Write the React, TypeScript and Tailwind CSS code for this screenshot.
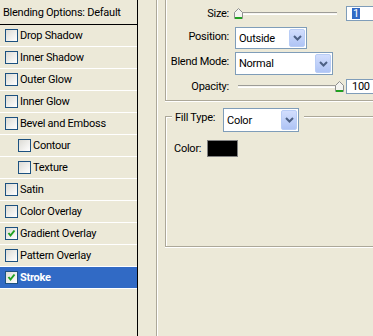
import React from "react";

type Layer = {
  label: string;
  sub?: boolean;
  checked?: boolean;
  active?: boolean;
};

const layers: Layer[] = [
  { label: "Drop Shadow" },
  { label: "Inner Shadow" },
  { label: "Outer Glow" },
  { label: "Inner Glow" },
  { label: "Bevel and Emboss" },
  { label: "Contour", sub: true },
  { label: "Texture", sub: true },
  { label: "Satin" },
  { label: "Color Overlay" },
  { label: "Gradient Overlay", checked: true },
  { label: "Pattern Overlay" },
  { label: "Stroke", checked: true, active: true },
];

const CheckBox = ({ checked }: { checked?: boolean }) => (
  <span className="w-[13px] h-[13px] shrink-0 border border-[#1C5180] bg-linear-to-br from-[#DCDBD5] to-white flex items-center justify-center">
    {checked && (
      <svg width="9" height="9" viewBox="0 0 9 9">
        <path d="M1.5 4 L3.5 6.5 L7.5 1.5" stroke="#21A121" strokeWidth="2" fill="none" />
      </svg>
    )}
  </span>
);

const Chevron = () => (
  <svg width="9" height="6" viewBox="0 0 9 6">
    <path d="M1 1 L4.5 4.5 L8 1" stroke="#4D6185" strokeWidth="2" fill="none" />
  </svg>
);

const Select = ({ value, className }: { value: string; className: string }) => (
  <div className={`${className} shrink-0 border border-[#7F9DB9] bg-white flex items-stretch p-[1px]`}>
    <span className="flex-1 flex items-center pl-[2px]">{value}</span>
    <span className="w-[16px] rounded-[2px] border border-[#B9CDF6] bg-linear-to-b from-[#D2DEFD] to-[#AFC4F5] flex items-center justify-center">
      <Chevron />
    </span>
  </div>
);

const Thumb = () => (
  <svg width="9" height="11" viewBox="0 0 9 11">
    <polygon points="4.5,0.5 8.5,4.5 8.5,10.5 0.5,10.5 0.5,4.5" fill="#F4F4F0" stroke="#8E8F8F" />
    <line x1="1" y1="10" x2="8" y2="10" stroke="#21A121" strokeWidth="2" />
  </svg>
);

const Slider = ({ className, thumbRight }: { className: string; thumbRight?: boolean }) => (
  <div className={`${className} relative h-[11px] flex items-center shrink-0`}>
    <div className="w-full h-[3px] border-t border-[#9D9C97] border-b border-b-white bg-[#F6F5F0]" />
    <div className={`absolute top-0 ${thumbRight ? "right-0" : "left-0"}`}>
      <Thumb />
    </div>
  </div>
);

export default function App() {
  return (
    <div className="w-[373px] h-[336px] overflow-hidden bg-[#ECE9D8] flex font-['Roboto',sans-serif] text-[11px] tracking-[-0.25px] text-black leading-[13px]">
      <div className="w-[138px] shrink-0 border-r border-black flex flex-col">
        <div className="h-[25px] border-b border-black flex items-center pl-[3px]">
          Blending Options: Default
        </div>
        {layers.map((item, i) => (
          <div
            key={i}
            className={`h-[22px] border-b border-white flex items-center gap-[2px] ${
              item.sub ? "pl-[18px]" : "pl-[5px]"
            } ${item.active ? "bg-[#316AC5] text-white font-bold" : ""}`}
          >
            <CheckBox checked={item.checked} />
            <span>{item.label}</span>
          </div>
        ))}
      </div>

      <div className="flex-1 min-w-0 pl-[18px]">
        <div className="h-full border-l border-[#ACA899] shadow-[inset_1px_0_0_#fff] pl-[8px]">
          <div className="w-[260px] h-[101px] border-l border-b border-[#ACA899] shadow-[inset_1px_0_0_#fff,0_1px_0_#fff] flex flex-col">
            <div className="mt-[5px] h-[17px] flex items-center">
              <span className="w-[63px] text-right">Size:</span>
              <Slider className="ml-[5px] w-[103px]" />
              <div className="ml-[9px] w-[40px] h-[15px] border border-[#7F9DB9] bg-white flex items-center pl-[5px]">
                <span className="bg-[#316AC5] text-white leading-[11px] px-[1px]">1</span>
              </div>
            </div>
            <div className="mt-[5px] h-[22px] flex items-start">
              <span className="w-[63px] text-right pt-[3px]">Position:</span>
              <Select value="Outside" className="ml-[6px] w-[72px] h-[22px]" />
            </div>
            <div className="mt-[3px] h-[22px] flex items-start">
              <span className="w-[63px] text-right pt-[3px]">Blend Mode:</span>
              <Select value="Normal" className="ml-[6px] w-[98px] h-[23px]" />
            </div>
            <div className="mt-[5px] h-[15px] flex items-center">
              <span className="w-[63px] text-right">Opacity:</span>
              <Slider className="ml-[9px] w-[106px]" thumbRight />
              <div className="ml-[2px] w-[40px] h-[15px] border border-[#7F9DB9] bg-white flex items-center pl-[5px]">
                100
              </div>
            </div>
          </div>

          <div className="mt-[15px] w-[260px] h-[131px] border-t border-l border-b border-[#ACA899] shadow-[inset_1px_1px_0_#fff,0_1px_0_#fff] flex flex-col">
            <div className="-mt-[9px] ml-[6px] w-fit bg-[#ECE9D8] pl-[3px] pr-[5px] flex items-start">
              <span className="pt-[3px] w-[43px]">Fill Type:</span>
              <Select value="Color" className="ml-[5px] w-[76px] h-[24px]" />
            </div>
            <div className="mt-[8px] ml-[8px] h-[17px] flex items-center">
              <span className="w-[33px]">Color:</span>
              <div className="w-[31px] h-[17px] border border-[#808080] bg-black" />
            </div>
          </div>
        </div>
      </div>
    </div>
  );
}
